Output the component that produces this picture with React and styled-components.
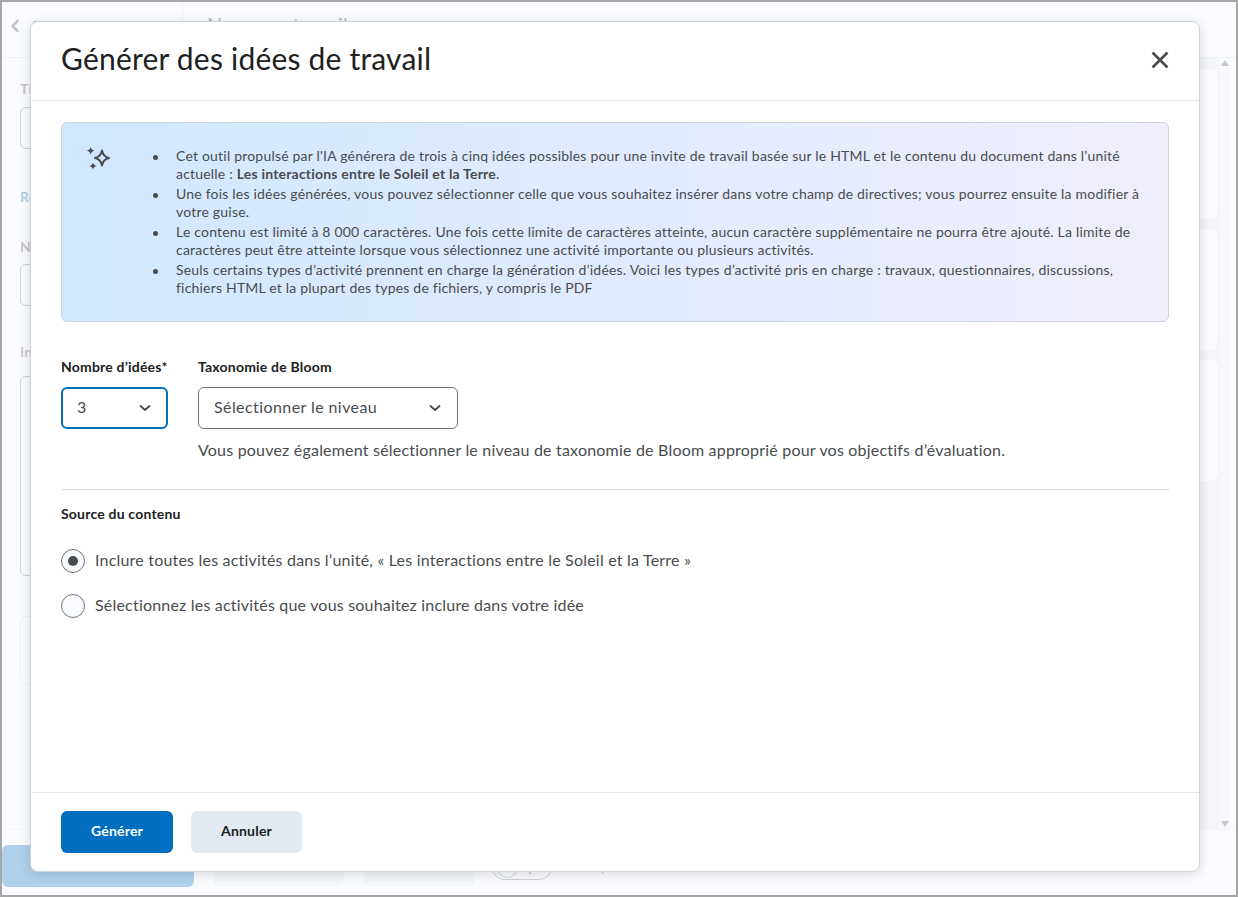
import React from 'react';
import styled, { createGlobalStyle } from 'styled-components';

const GlobalStyle = createGlobalStyle`
  html, body {
    margin: 0;
    padding: 0;
    height: 100%;
  }
  body {
    font-family: Lato, "Liberation Sans", sans-serif;
    letter-spacing: 0.2px;
    color: #494c4e;
    background: #fff;
  }
`;

const Frame = styled.div`
  position: relative;
  box-sizing: border-box;
  width: 1238px;
  height: 897px;
  border: 2px solid #a6a6a6;
  background: #fff;
  overflow: hidden;
  display: flex;
  flex-direction: column;
`;

/* page under the dialog */
const TopBar = styled.header`
  flex: none;
  height: 55px;
  display: flex;
  align-items: center;
  border-bottom: 1px solid #d3d9e3;
`;

const BackLink = styled.div`
  width: 181px;
  height: 100%;
  box-sizing: border-box;
  padding: 0 0 8px 6px;
  display: flex;
  align-items: center;
  gap: 10px;
  font-size: 14px;
  border-right: 1px solid #d3d9e3;
`;

const PageTitle = styled.div`
  padding: 0 0 12px 24px;
  font-size: 20px;
  color: #202122;
`;

const PageBody = styled.div`
  flex: 1;
  min-height: 0;
  display: flex;
  padding-right: 6px;
`;

const FormColumn = styled.div`
  flex: 1;
  padding: 22px 0 0 18px;
`;

const FieldLabel = styled.div`
  font-size: 14px;
  font-weight: 700;
  line-height: 18px;
  margin-bottom: ${p => p.$gap}px;
`;

const SectionLink = styled.div`
  font-size: 14px;
  font-weight: 700;
  line-height: 18px;
  color: #006fbf;
  margin: 39px 0 32px;
`;

const FakeInput = styled.div`
  box-sizing: border-box;
  width: 600px;
  height: ${p => p.$height}px;
  margin-bottom: ${p => p.$gap}px;
  border: 1px solid ${p => (p.$soft ? '#d3d9e3' : '#6e7477')};
  border-radius: 6px;
  background: #fff;
`;

const SideColumn = styled.aside`
  flex: none;
  width: 68px;
  padding: 11px 2px 0 0;
  box-sizing: border-box;
  display: flex;
  flex-direction: column;
  gap: 10px;
  background: #e6ebf2;
`;

const SideCard = styled.div`
  height: ${p => p.$height}px;
  background: #fff;
  border-radius: 0 8px 8px 0;
`;

const ScrollTrack = styled.div`
  position: relative;
  flex: none;
  width: 10px;
  background: #f1f3f7;
`;

const ScrollArrow = styled.span`
  position: absolute;
  left: 1px;
  ${p => (p.$down ? 'bottom: 2px;' : 'top: 2px;')}
  border-left: 4px solid transparent;
  border-right: 4px solid transparent;
  ${p => (p.$down ? 'border-top: 6px solid #505050;' : 'border-bottom: 6px solid #505050;')}
`;

const PageFooter = styled.footer`
  flex: none;
  height: 66px;
  box-sizing: border-box;
  padding: 15px 0 0;
  display: flex;
  align-items: flex-start;
  gap: 20px;
  background: #fff;
  border-top: 1px solid #e6eaf0;
`;

const PageButton = styled.div`
  width: ${p => p.$width}px;
  height: 42px;
  box-sizing: border-box;
  padding-bottom: 4px;
  display: flex;
  align-items: center;
  justify-content: center;
  font-size: 14px;
  font-weight: 700;
  color: ${p => (p.$primary ? '#fff' : '#202122')};
  border-radius: 6px;
  background: ${p => (p.$primary ? '#006fbf' : '#e3e9f1')};
`;

const ToggleRow = styled.div`
  display: flex;
  align-items: center;
  gap: 6px;
  margin: 10px 0 0 -2px;
  font-size: 14px;
  line-height: 25px;
`;

const ToggleLabel = styled.span`
  margin-top: -4px;
`;

const Toggle = styled.div`
  position: relative;
  width: 60px;
  height: 25px;
  box-sizing: border-box;
  padding: 1px;
  border: 1px solid #6e7477;
  border-radius: 13px;

  &::before {
    content: '';
    display: block;
    box-sizing: border-box;
    width: 21px;
    height: 21px;
    border: 1px solid #6e7477;
    border-radius: 50%;
    margin-left: 3px;
  }

  &::after {
    content: '';
    position: absolute;
    left: 36px;
    top: 14px;
    width: 2px;
    height: 4px;
    background: #6e7477;
  }
`;

const Scrim = styled.div`
  position: absolute;
  inset: 0;
  background: rgba(249, 251, 255, 0.7);
`;

/* dialog */
const Dialog = styled.section`
  position: absolute;
  left: 28px;
  top: 19px;
  width: 1170px;
  height: 851px;
  box-sizing: border-box;
  display: flex;
  flex-direction: column;
  background: #fff;
  border: 1px solid #cdd5dc;
  border-radius: 8px;
  box-shadow: 0 2px 12px rgba(0, 0, 0, 0.15);
`;

const DialogHeader = styled.div`
  flex: none;
  height: 79px;
  box-sizing: border-box;
  padding: 0 30px;
  display: flex;
  align-items: flex-start;
  justify-content: space-between;
  border-bottom: 1px solid #e3e9f1;
`;

const DialogTitle = styled.h1`
  margin: 17px 0 0;
  font-size: 30px;
  line-height: 38px;
  font-weight: 400;
  color: #202122;
`;

const CloseIcon = styled.svg`
  width: 18px;
  height: 18px;
  margin-top: 29px;
  fill: none;
  stroke: #494c4e;
  stroke-width: 2.6;
`;

const DialogBody = styled.div`
  flex: 1;
  min-height: 0;
  padding: 21px 30px 0;
`;

const Banner = styled.div`
  display: flex;
  box-sizing: border-box;
  padding: 24px;
  border: 1px solid #cdd5dc;
  border-radius: 6px;
  background: linear-gradient(90deg, #cfe8ff 0%, #e1ebfe 50%, #f0eefd 100%);
`;

const SparkleIcon = styled.svg`
  flex: none;
  width: 24px;
  height: 24px;
  color: #494c4e;
`;

const BannerList = styled.ul`
  flex: 1;
  margin: 0;
  padding: 0 0 0 66px;
  list-style: none;
  font-size: 14px;
  line-height: 18px;
  color: #494c4e;

  li {
    position: relative;
  }
  li + li {
    margin-top: 2px;
  }
  li::before {
    content: '';
    position: absolute;
    left: -23px;
    top: 8px;
    width: 5px;
    height: 5px;
    border-radius: 50%;
    background: #494c4e;
  }
  strong {
    font-weight: 700;
  }
`;

const FieldsRow = styled.div`
  display: flex;
  gap: 30px;
  margin-top: 35px;
`;

const FieldStack = styled.div`
  display: flex;
  flex-direction: column;
`;

const BoldLabel = styled.div`
  font-size: 14px;
  font-weight: 700;
  line-height: 20px;
  color: #202122;
`;

const Select = styled.div`
  box-sizing: border-box;
  width: ${p => p.$width}px;
  height: 42px;
  margin-top: 10px;
  padding: 0 ${p => (p.$focused ? 14 : 15)}px 3px;
  display: flex;
  align-items: center;
  justify-content: space-between;
  font-size: 16px;
  letter-spacing: 0.42px;
  color: #494c4e;
  border: ${p => (p.$focused ? '2px solid #006fbf' : '1px solid #6e7477')};
  border-radius: 6px;
  background: #fff;
`;

const Chevron = styled.svg`
  width: 14px;
  height: 14px;
  fill: none;
  stroke: #494c4e;
  stroke-width: ${p => p.$weight || 1.8};
  stroke-linecap: round;
  stroke-linejoin: round;
`;

const SelectChevron = styled(Chevron)`
  margin-top: 3px;
`;

const HelpText = styled.p`
  margin: 10px 0 0;
  font-size: 16px;
  line-height: 22px;
  color: #494c4e;
`;

const Divider = styled.hr`
  margin: 28px 0 14px;
  border: 0;
  border-top: 1px solid #d3d9e3;
`;

const RadioGroup = styled.div`
  margin-top: 25px;
  display: flex;
  flex-direction: column;
  gap: 21px;
`;

const RadioRow = styled.label`
  display: flex;
  align-items: center;
  gap: 10px;
  font-size: 16px;
  line-height: 24px;
  color: #494c4e;
`;

const RadioText = styled.span`
  margin-top: -2px;
`;

const RadioMark = styled.span`
  flex: none;
  box-sizing: border-box;
  width: 24px;
  height: 24px;
  display: flex;
  align-items: center;
  justify-content: center;
  border: 1px solid #6e7477;
  border-radius: 50%;
  background: #f9fbff;

  &::after {
    content: '';
    display: ${p => (p.$checked ? 'block' : 'none')};
    width: 10px;
    height: 10px;
    border-radius: 50%;
    background: #494c4e;
  }
`;

const DialogFooter = styled.div`
  flex: none;
  height: 79px;
  box-sizing: border-box;
  padding: 18px 30px 0;
  display: flex;
  align-items: flex-start;
  gap: 18px;
  border-top: 1px solid #e3e9f1;
`;

const Button = styled.button`
  box-sizing: border-box;
  width: ${p => p.$width}px;
  height: 42px;
  padding: 0 0 3px;
  border: 0;
  border-radius: 6px;
  font-family: inherit;
  font-size: 14px;
  font-weight: 700;
  letter-spacing: inherit;
  color: ${p => (p.$primary ? '#fff' : '#202122')};
  background: ${p => (p.$primary ? '#006fbf' : '#e3e9f1')};
`;

const ChevronDown = () => (
  <SelectChevron viewBox="0 0 14 14">
    <path d="M2.500 5l4.500 4 4.500-4" />
  </SelectChevron>
);

function App() {
  return (
    <>
      <GlobalStyle />
      <Frame>
        <TopBar>
          <BackLink>
            <Chevron viewBox="0 0 14 14" $weight={2.6}>
              <path d="M9.500 2L4.500 7l5 5" />
            </Chevron>
            Retour à Contenu
          </BackLink>
          <PageTitle>Nouveau travail</PageTitle>
        </TopBar>
        <PageBody>
          <FormColumn>
            <FieldLabel $gap={9}>Titre</FieldLabel>
            <FakeInput $height={42} />
            <SectionLink>Remise</SectionLink>
            <FieldLabel $gap={8}>Note</FieldLabel>
            <FakeInput $height={42} $gap={37} />
            <FieldLabel $gap={15}>Instructions</FieldLabel>
            <FakeInput $height={200} $gap={40} />
            <FakeInput $height={68} $soft />
          </FormColumn>
          <SideColumn>
            <SideCard $height={150} />
            <SideCard $height={121} />
            <SideCard $height={121} />
          </SideColumn>
          <ScrollTrack>
            <ScrollArrow />
            <ScrollArrow $down />
          </ScrollTrack>
        </PageBody>
        <PageFooter>
          <PageButton $width={192} $primary>Enregistrer et fermer</PageButton>
          <PageButton $width={130}>Enregistrer</PageButton>
          <PageButton $width={110}>Annuler</PageButton>
          <ToggleRow>
            <Toggle />
            <ToggleLabel>Caché pour les utilisateurs</ToggleLabel>
          </ToggleRow>
        </PageFooter>
        <Scrim />

        <Dialog role="dialog">
          <DialogHeader>
            <DialogTitle>Générer des idées de travail</DialogTitle>
            <CloseIcon viewBox="0 0 18 18">
              <path d="M1.500 1.500l15 15M16.500 1.500l-15 15" />
            </CloseIcon>
          </DialogHeader>

          <DialogBody>
            <Banner>
              <SparkleIcon viewBox="0 0 24 24">
                <path
                  d="M16 3.500c.8 4 2.900 6.600 7 7.500-4.100.9-6.200 3.500-7 7.500-.8-4-2.900-6.600-7-7.500 4.100-.9 6.200-3.500 7-7.500z"
                  fill="none"
                  stroke="currentColor"
                  strokeWidth="2"
                  strokeLinejoin="round"
                />
                <path
                  d="M4.700-.3c.4 2.300 1.600 3.500 4 4-2.400.5-3.600 1.700-4 4-.4-2.300-1.600-3.500-4-4 2.400-.5 3.600-1.700 4-4zM7 15.300c.4 2.100 1.500 3.300 3.700 3.700-2.200.4-3.300 1.600-3.700 3.700-.4-2.100-1.500-3.300-3.700-3.700 2.200-.4 3.300-1.600 3.700-3.700z"
                  fill="currentColor"
                />
              </SparkleIcon>
              <BannerList>
                <li>
                  Cet outil propulsé par l'IA générera de trois à cinq idées possibles pour une invite de travail basée sur le HTML et le contenu du document dans l’unité actuelle : <strong>Les interactions entre le Soleil et la Terre</strong>.
                </li>
                <li>
                  Une fois les idées générées, vous pouvez sélectionner celle que vous souhaitez insérer dans votre champ de directives; vous pourrez ensuite la modifier à votre guise.
                </li>
                <li>
                  Le contenu est limité à 8 000 caractères. Une fois cette limite de caractères atteinte, aucun caractère supplémentaire ne pourra être ajouté. La limite de caractères peut être atteinte lorsque vous sélectionnez une activité importante ou plusieurs activités.
                </li>
                <li>
                  Seuls certains types d’activité prennent en charge la génération d’idées. Voici les types d’activité pris en charge : travaux, questionnaires, discussions, fichiers HTML et la plupart des types de fichiers, y compris le PDF
                </li>
              </BannerList>
            </Banner>

            <FieldsRow>
              <FieldStack>
                <BoldLabel>Nombre d’idées*</BoldLabel>
                <Select $width={107} $focused>
                  3
                  <ChevronDown />
                </Select>
              </FieldStack>
              <FieldStack>
                <BoldLabel>Taxonomie de Bloom</BoldLabel>
                <Select $width={260}>
                  Sélectionner le niveau
                  <ChevronDown />
                </Select>
                <HelpText>
                  Vous pouvez également sélectionner le niveau de taxonomie de Bloom approprié pour vos objectifs d’évaluation.
                </HelpText>
              </FieldStack>
            </FieldsRow>

            <Divider />

            <BoldLabel>Source du contenu</BoldLabel>
            <RadioGroup>
              <RadioRow>
                <RadioMark $checked />
                <RadioText>Inclure toutes les activités dans l’unité, « Les interactions entre le Soleil et la Terre »</RadioText>
              </RadioRow>
              <RadioRow>
                <RadioMark />
                <RadioText>Sélectionnez les activités que vous souhaitez inclure dans votre idée</RadioText>
              </RadioRow>
            </RadioGroup>
          </DialogBody>

          <DialogFooter>
            <Button $primary $width={112}>Générer</Button>
            <Button $width={111}>Annuler</Button>
          </DialogFooter>
        </Dialog>
      </Frame>
    </>
  );
}

export default App;
